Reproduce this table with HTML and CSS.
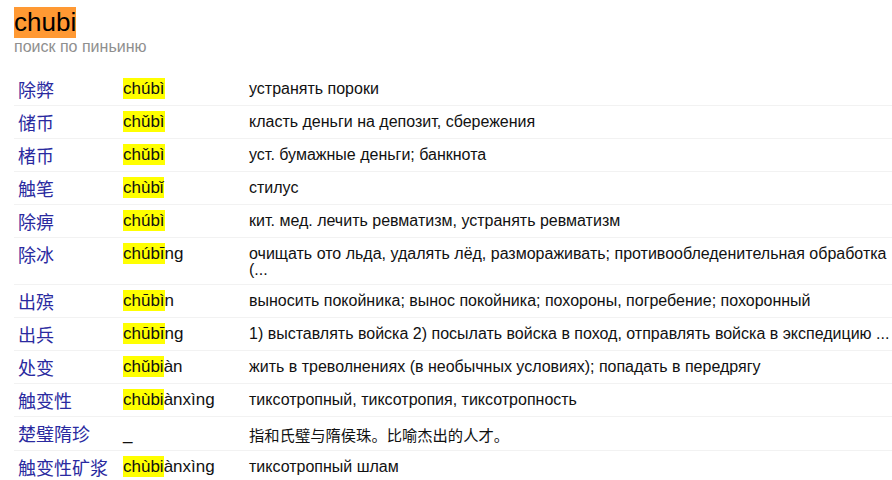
FILE: index.html
```html
<!DOCTYPE html>
<html lang="ru">
<head>
<meta charset="utf-8">
<title>chubi</title>
<link rel="stylesheet" href="styles.css">
</head>
<body>
<div class="page">
  <h1 class="query"><span class="query-text">chubi</span></h1>
  <div class="subtitle">поиск по пиньиню</div>
  <table class="results">
    <colgroup><col class="c-hz"><col class="c-py"><col class="c-def"></colgroup>
    <tr><td class="hz">除弊</td><td class="py"><mark>chúbì</mark></td><td class="def">устранять пороки</td></tr>
    <tr><td class="hz">储币</td><td class="py"><mark>chǔbì</mark></td><td class="def">класть деньги на депозит, сбережения</td></tr>
    <tr><td class="hz">楮币</td><td class="py"><mark>chǔbì</mark></td><td class="def">уст. бумажные деньги; банкнота</td></tr>
    <tr><td class="hz">触笔</td><td class="py"><mark>chùbǐ</mark></td><td class="def">стилус</td></tr>
    <tr><td class="hz">除痹</td><td class="py"><mark>chúbì</mark></td><td class="def">кит. мед. лечить ревматизм, устранять ревматизм</td></tr>
    <tr><td class="hz">除冰</td><td class="py"><mark>chúbī</mark>ng</td><td class="def">очищать ото льда, удалять лёд, размораживать; противообледенительная обработка (...</td></tr>
    <tr><td class="hz">出殡</td><td class="py"><mark>chūbì</mark>n</td><td class="def">выносить покойника; вынос покойника; похороны, погребение; похоронный</td></tr>
    <tr><td class="hz">出兵</td><td class="py"><mark>chūbī</mark>ng</td><td class="def">1) выставлять войска 2) посылать войска в поход, отправлять войска в экспедицию ...</td></tr>
    <tr><td class="hz">处变</td><td class="py"><mark>chǔbi</mark>àn</td><td class="def">жить в треволнениях (в необычных условиях); попадать в передрягу</td></tr>
    <tr><td class="hz">触变性</td><td class="py"><mark>chùbi</mark>ànxìng</td><td class="def">тиксотропный, тиксотропия, тиксотропность</td></tr>
    <tr><td class="hz">楚璧隋珍</td><td class="py py-low">_</td><td class="def def-cjk">指和氏璧与隋侯珠。比喻杰出的人才。</td></tr>
    <tr><td class="hz">触变性矿浆</td><td class="py"><mark>chùbi</mark>ànxìng</td><td class="def">тиксотропный шлам</td></tr>
  </table>
</div>
</body>
</html>
```

FILE: styles.css
```css
html, body {
  margin: 0;
  padding: 0;
  background: #ffffff;
}

body {
  font-family: "Liberation Sans", Arial, "Noto Sans CJK SC", sans-serif;
  color: #111111;
  overflow: hidden;
}

.page {
  padding: 7px 0 0 14px;
}

.query {
  margin: 0;
  font-size: 26px;
  font-weight: normal;
  line-height: 31px;
  height: 31px;
}

.query-text {
  background: #ff9933;
  color: #000000;
  display: inline-block;
  line-height: 31px;
}

.subtitle {
  margin-top: 0;
  font-size: 16px;
  line-height: 18px;
  color: #8f8f8f;
}

.results {
  margin-top: 17px;
  width: 878px;
  border-collapse: collapse;
  table-layout: fixed;
}

.c-hz { width: 105px; }
.c-py { width: 126px; }

.results td {
  padding: 6px 4px 6px 4px;
  border-bottom: 1px solid #f2f2f2;
  vertical-align: top;
}

.hz {
  font-family: "Noto Sans CJK SC", sans-serif;
  font-size: 18px;
  line-height: 20px;
  color: #2a2aa0;
  white-space: nowrap;
}

.py {
  font-size: 17px;
  line-height: 20px;
  color: #111111;
  white-space: nowrap;
}

.py mark {
  background: #ffff00;
  color: #111111;
  padding: 1px 0;
}

.results td.py-low {
  padding-top: 8px;
  padding-bottom: 4px;
}

.results td.def {
  font-size: 16px;
  line-height: 16px;
  padding-top: 8px;
  padding-right: 0;
}

.results td.def-cjk {
  font-family: "Noto Sans CJK SC", sans-serif;
  font-size: 15.3px;
  line-height: 20px;
  padding-top: 7px;
}
```
